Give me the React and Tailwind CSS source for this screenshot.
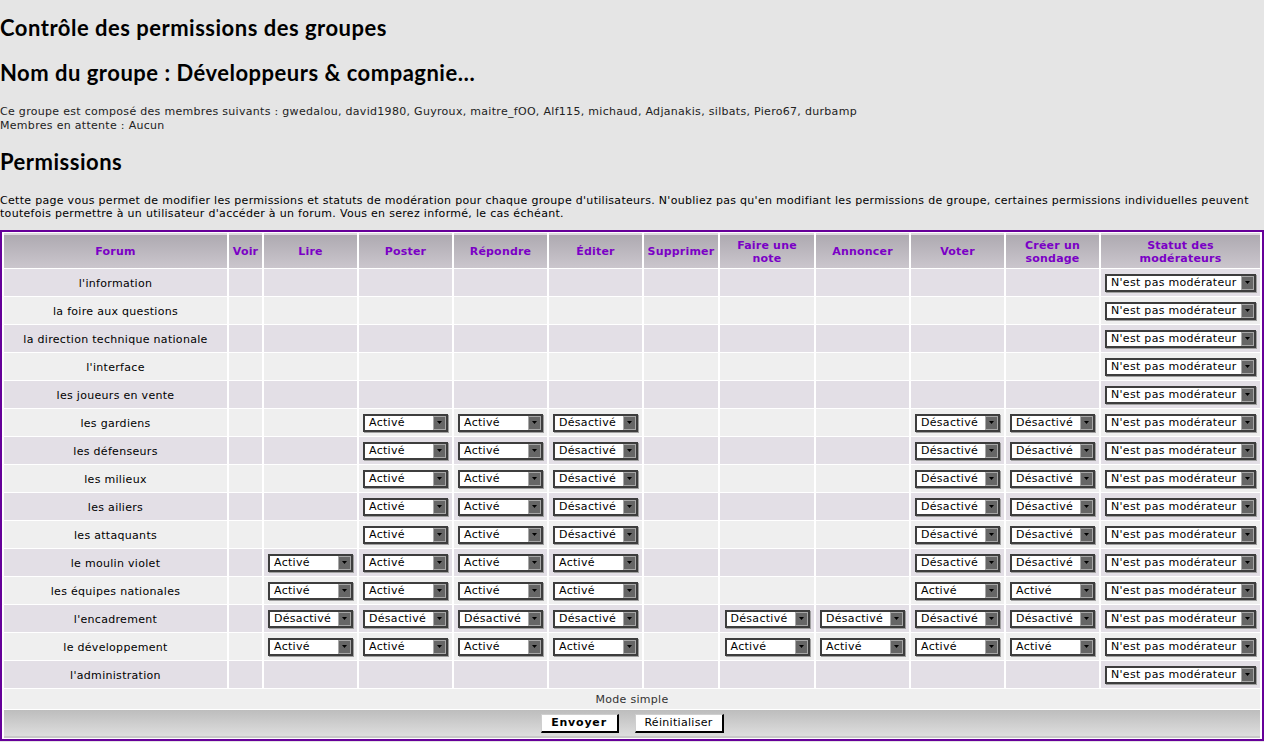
const A = "Activé";
const D = "Désactivé";

const COLS = [
  { label: "Forum", w: "w-[223px]" },
  { label: "Voir", w: "w-[33px]" },
  { label: "Lire", w: "w-[93px]" },
  { label: "Poster", w: "w-[93px]" },
  { label: "Répondre", w: "w-[93px]" },
  { label: "Éditer", w: "w-[93px]" },
  { label: "Supprimer", w: "w-[74px]" },
  { label: ["Faire une", "note"], w: "w-[94px]" },
  { label: "Annoncer", w: "w-[93px]" },
  { label: "Voter", w: "w-[93px]" },
  { label: ["Créer un", "sondage"], w: "w-[93px]" },
  { label: ["Statut des", "modérateurs"], w: "w-[159px]" },
];

// voir, lire, poster, repondre, editer, supprimer, note, annoncer, voter, sondage
const ROWS = [
  ["l'information", []],
  ["la foire aux questions", []],
  ["la direction technique nationale", []],
  ["l'interface", []],
  ["les joueurs en vente", []],
  ["les gardiens", [null, null, A, A, D, null, null, null, D, D]],
  ["les défenseurs", [null, null, A, A, D, null, null, null, D, D]],
  ["les milieux", [null, null, A, A, D, null, null, null, D, D]],
  ["les ailiers", [null, null, A, A, D, null, null, null, D, D]],
  ["les attaquants", [null, null, A, A, D, null, null, null, D, D]],
  ["le moulin violet", [null, A, A, A, A, null, null, null, D, D]],
  ["les équipes nationales", [null, A, A, A, A, null, null, null, A, A]],
  ["l'encadrement", [null, D, D, D, D, null, D, D, D, D]],
  ["le développement", [null, A, A, A, A, null, A, A, A, A]],
  ["l'administration", []],
];

function Select({ value, wide }) {
  return (
    <div
      className={`mx-auto flex h-[18px] items-stretch border-2 border-[#3d3d3d] bg-white shadow-[1px_1px_0_#a0a0a0] ${
        wide ? "w-[151px]" : "w-[85px]"
      }`}
    >
      <span className="flex-1 overflow-hidden whitespace-nowrap pl-[4px] text-left text-[11px] leading-[14px] text-black">
        {value}
      </span>
      <span className="flex w-[13px] items-center justify-center border border-[#a8a8a8] bg-[#666666]">
        <svg width="5" height="3" viewBox="0 0 5 3">
          <path d="M0 0h5L2.5 3z" fill="#000" />
        </svg>
      </span>
    </div>
  );
}

export default function App() {
  return (
    <div className="min-h-[742px] bg-[#e5e5e5] font-['DejaVu_Sans',Verdana,sans-serif] text-[11px] tracking-[0.3px] text-black">
      <h1 className="pt-[16px] font-['Lato',sans-serif] text-[22px] font-bold leading-[24px] tracking-[0.5px]">
        Contrôle des permissions des groupes
      </h1>
      <h2 className="mt-[21px] font-['Lato',sans-serif] text-[22px] font-bold leading-[24px] tracking-[0.5px]">
        Nom du groupe : Développeurs &amp; compagnie…
      </h2>
      <div className="mt-[20px] leading-[14px] text-[#222]">
        <p>
          Ce groupe est composé des membres suivants : gwedalou, david1980, Guyroux, maitre_fOO, Alf115,
          michaud, Adjanakis, silbats, Piero67, durbamp
        </p>
        <p>Membres en attente : Aucun</p>
      </div>
      <h2 className="mt-[17px] font-['Lato',sans-serif] text-[22px] font-bold leading-[24px] tracking-[0.5px]">
        Permissions
      </h2>
      <p className="mt-[20px] leading-[13px]">
        Cette page vous permet de modifier les permissions et statuts de modération pour chaque groupe
        d'utilisateurs. N'oubliez pas qu'en modifiant les permissions de groupe, certaines permissions individuelles
        peuvent
        <br />
        toutefois permettre à un utilisateur d'accéder à un forum. Vous en serez informé, le cas échéant.
      </p>

      <table className="mt-[10px] w-full table-fixed border-separate border-spacing-x-[2px] border-spacing-y-px border-2 border-[#660099] bg-white">
        <colgroup>
          {COLS.map((c, i) => (
            <col key={i} className={c.w} />
          ))}
        </colgroup>
        <thead>
          <tr>
            {COLS.map((c, i) => (
              <th
                key={i}
                className="h-[35px] border-t-2 border-[#dedade] bg-linear-to-b from-[#aeaab1] to-[#cbc6cd] p-0 text-center text-[11px] font-bold leading-[13px] tracking-[0.2px] text-[#7b00c6]"
              >
                {Array.isArray(c.label) ? (
                  <>
                    {c.label[0]}
                    <br />
                    {c.label[1]}
                  </>
                ) : (
                  c.label
                )}
              </th>
            ))}
          </tr>
        </thead>
        <tbody>
          {ROWS.map(([name, perms], r) => {
            const bg = r % 2 === 0 ? "bg-[#e3dfe6]" : "bg-[#efefef]";
            return (
              <tr key={name}>
                <td className={`h-[27px] p-0 pt-[3px] text-center ${bg}`}>{name}</td>
                {Array.from({ length: 10 }).map((_, i) => (
                  <td key={i} className={`h-[27px] p-0 ${bg}`}>
                    {perms[i] ? <Select value={perms[i]} /> : null}
                  </td>
                ))}
                <td className={`h-[27px] p-0 ${bg}`}>
                  <Select value="N'est pas modérateur" wide />
                </td>
              </tr>
            );
          })}
          <tr>
            <td colSpan={12} className="h-[20px] bg-[#efefef] p-0 pt-[2px] text-center text-[#333]">
              Mode simple
            </td>
          </tr>
          <tr>
            <td
              colSpan={12}
              className="h-[28px] border-b-2 border-[#c8c8c8] bg-linear-to-b from-[#bdbdbd] to-[#dedede] p-0"
            >
              <div className="flex items-center justify-center gap-[16px] pt-[1px]">
                <button className="h-[19px] w-[78px] border-t border-l border-r-2 border-b-2 border-t-[#cfcfcf] border-l-[#cfcfcf] border-r-black border-b-black bg-white p-0 text-[11px] font-bold tracking-[0.8px] text-black">
                  Envoyer
                </button>
                <button className="h-[19px] w-[89px] border-t border-l border-r-2 border-b-2 border-t-[#cfcfcf] border-l-[#cfcfcf] border-r-black border-b-black bg-white p-0 text-[11px] text-black">
                  Réinitialiser
                </button>
              </div>
            </td>
          </tr>
        </tbody>
      </table>
    </div>
  );
}
